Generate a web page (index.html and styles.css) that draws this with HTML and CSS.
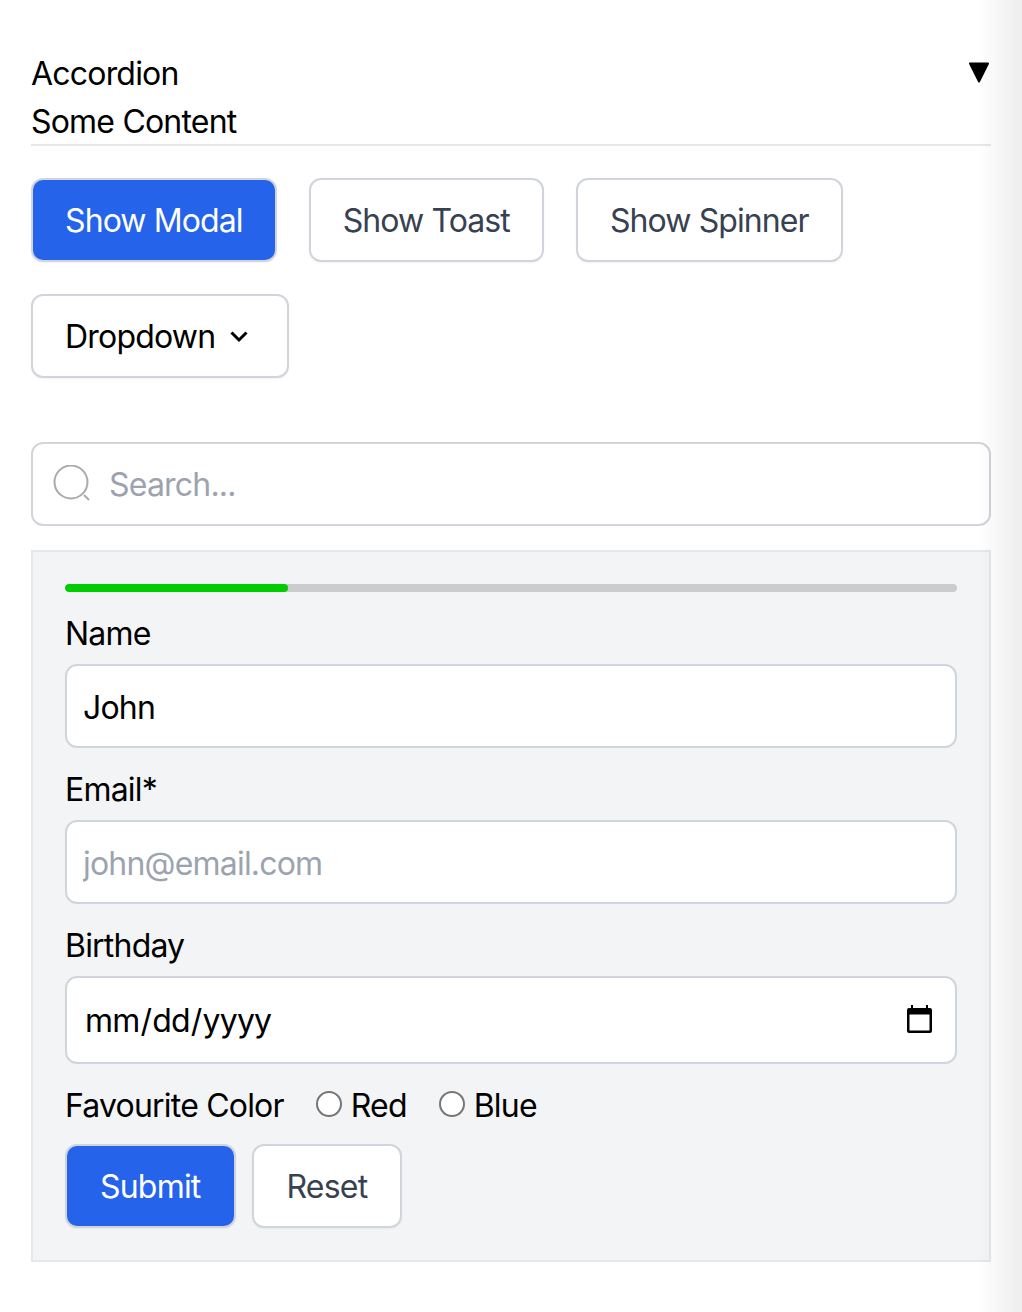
FILE: index.html
```html
<!DOCTYPE html>
<html lang="en">
<head>
    <meta charset="UTF-8">
    <title>Components</title>
    <link rel="stylesheet" href="styles.css">
</head>
<body>
    <div class="edge-shade"></div>
    <div class="accordion">
        <div class="accordion-head">
            <span>Accordion</span>
            <svg class="accordion-arrow" width="22" height="22" viewBox="0 0 22 22"><path d="M2 2.5h18L11 20.5z" fill="#000" stroke="#000" stroke-width="2" stroke-linejoin="round"/></svg>
        </div>
        <div>Some Content</div>
    </div>

    <div class="button-row">
        <button class="btn btn-primary">Show Modal</button>
        <button class="btn">Show Toast</button>
        <button class="btn">Show Spinner</button>
        <button class="btn btn-dropdown">Dropdown
            <svg width="32" height="32" viewBox="0 0 32 32"><path d="M8.5 12.5l7.5 7.5 7.5-7.5" fill="none" stroke="#000" stroke-width="3"/></svg>
        </button>
    </div>

    <div class="search">
        <svg class="search-icon" width="38" height="38" viewBox="0 0 38 38"><circle cx="18" cy="17" r="16.5" fill="none" stroke="#aaa" stroke-width="2"/><path d="M31 30l5 5" stroke="#aaa" stroke-width="2"/></svg>
        <input class="search-input" type="text" placeholder="Search...">
    </div>

    <form class="panel">
        <div class="progress"><div class="progress-fill" style="width: 25%"></div></div>

        <label class="field-label" for="name">Name</label>
        <input class="field" id="name" type="text" value="John">

        <label class="field-label" for="email">Email*</label>
        <input class="field" id="email" type="email" placeholder="john@email.com">

        <label class="field-label" for="birthday">Birthday</label>
        <input class="field field-date" id="birthday" type="date">

        <div class="radio-row">
            <span class="radio-title">Favourite Color</span>
            <label class="radio-option"><input type="radio" name="color"> Red</label>
            <label class="radio-option"><input type="radio" name="color"> Blue</label>
        </div>

        <div class="form-actions">
            <button class="btn btn-primary" type="button">Submit</button>
            <button class="btn" type="button">Reset</button>
        </div>
    </form>
</body>
</html>
```

FILE: styles.css
```css
* {
    box-sizing: border-box;
}
body {
    margin: 0;
    padding: 50px 31px 50px;
    background: #fff;
    color: #000;
    font-family: "Inter", sans-serif;
    font-size: 32px;
    line-height: 48px;
    letter-spacing: -0.8px;
}
.edge-shade {
    position: fixed;
    top: 0;
    right: 0;
    bottom: 0;
    width: 44px;
    background: linear-gradient(to right, rgba(0, 0, 0, 0), rgba(0, 0, 0, 0.07));
    pointer-events: none;
}
.accordion {
    border-bottom: 2px solid #e5e7eb;
    height: 96px;
}
.accordion-head {
    display: flex;
    justify-content: space-between;
    align-items: flex-start;
}
.accordion-arrow {
    margin-top: 11px;
    margin-right: 1px;
}
.button-row {
    display: flex;
    flex-wrap: wrap;
    gap: 32px;
    margin-top: 32px;
}
.button-row .btn {
    letter-spacing: -0.9px;
}
.btn {
    height: 84px;
    padding: 2px 32px 0;
    background: #fff;
    color: #374151;
    border: 2px solid #d1d5db;
    border-radius: 12px;
    box-shadow: 0 1px 2px rgba(0, 0, 0, 0.05);
    font: inherit;
    letter-spacing: inherit;
}
.btn-primary {
    background: #2563eb;
    color: #fff;
}
.button-row .btn-dropdown {
    display: flex;
    align-items: center;
    gap: 8px;
    color: #000;
    letter-spacing: -0.8px;
}
.btn-dropdown svg {
    margin-top: -2px;
}
.search {
    display: flex;
    align-items: center;
    height: 84px;
    margin-top: 64px;
    padding: 2px 20px 0;
    background: #fff;
    border: 2px solid #d1d5db;
    border-radius: 12px;
}
.search-icon {
    flex: none;
    margin-top: -2px;
}
.search-input {
    flex: 1;
    min-width: 0;
    margin-left: 18px;
    padding: 0;
    border: 0;
    outline: 0;
    background: none;
    font: inherit;
    letter-spacing: inherit;
}
input::placeholder {
    color: #9ca3af;
    opacity: 1;
}
.panel {
    margin-top: 24px;
    padding: 32px;
    background: #f3f4f6;
    border: 2px solid #e5e7eb;
}
.progress {
    height: 8px;
    margin-bottom: 17px;
    background: #ccc;
    border-radius: 4px;
    overflow: hidden;
}
.progress-fill {
    height: 100%;
    background: #0c0;
    border-radius: 4px;
}
.field-label {
    display: block;
    padding-top: 1px;
    margin-bottom: 6px;
}
.field {
    display: block;
    width: 100%;
    height: 84px;
    margin-bottom: 17px;
    padding: 2px 16px 0;
    background: #fff;
    color: #000;
    border: 2px solid #d1d5db;
    border-radius: 12px;
    font: inherit;
    letter-spacing: inherit;
}
.field-date {
    height: 88px;
    padding-left: 17px;
}
.field-date::-webkit-calendar-picker-indicator {
    width: 32px;
    height: 32px;
    margin-right: 4px;
    padding: 0;
    opacity: 1;
    background: url("data:image/svg+xml,%3Csvg xmlns='http://www.w3.org/2000/svg' viewBox='0 0 32 32'%3E%3Cpath d='M8 0h2v3h13V0h2v3h2a2 2 0 0 1 2 2v21a2 2 0 0 1-2 2H6a2 2 0 0 1-2-2V5a2 2 0 0 1 2-2h2z' fill='%23000'/%3E%3Crect x='6.5' y='9.5' width='20' height='16' fill='%23fff'/%3E%3C/svg%3E") no-repeat center / contain;
}
.radio-row {
    display: flex;
    align-items: center;
    gap: 32px;
    height: 48px;
    padding-top: 2px;
}
.radio-option {
    display: flex;
    align-items: center;
    gap: 9px;
}
.radio-option input {
    appearance: none;
    width: 26px;
    height: 26px;
    margin: -4px 0 0;
    background: #fff;
    border: 2px solid #767676;
    border-radius: 50%;
}
.form-actions {
    display: flex;
    gap: 16px;
    margin-top: 15px;
}
.form-actions .btn {
    padding: 2px 33px 0;
}
```
